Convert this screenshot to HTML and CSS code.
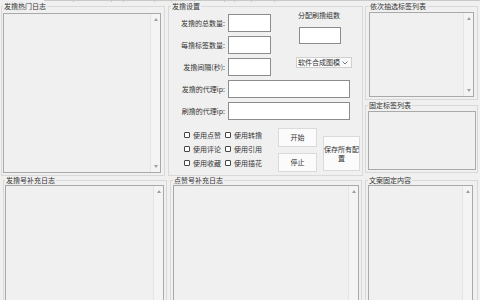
FILE: index.html
```html
<!DOCTYPE html>
<html lang="zh-CN">
<head>
<meta charset="utf-8">
<title>发撸工具</title>
<link rel="stylesheet" href="styles.css">
</head>
<body>
<div class="tabstrip"><span></span><span></span><span></span><span></span><span></span><span></span><span></span><span></span><span></span><span></span><span></span></div>
<div class="layout">
  <fieldset class="grp g-hot">
    <legend>发撸热门日志</legend>
    <div class="memo"><div class="vscroll"><i class="up"></i><i class="down"></i></div></div>
  </fieldset>

  <fieldset class="grp g-set">
    <legend>发撸设置</legend>
    <div class="block1">
      <div class="fields1">
        <div class="row"><span class="lbl">发撸的总数量:</span><span class="inp"></span></div>
        <div class="row"><span class="lbl">每撸标签数量:</span><span class="inp"></span></div>
        <div class="row"><span class="lbl">发撸间隔(秒):</span><span class="inp"></span></div>
      </div>
      <div class="right1">
        <span class="lbl2">分配刷撸组数</span>
        <span class="inp inp2"></span>
        <div class="combo"><span class="combo-text">软件合成图模</span><svg class="chev" width="6" height="4" viewBox="0 0 6 4"><polyline points="0.5,0.5 3,3 5.5,0.5" fill="none" stroke="#555" stroke-width="0.8"/></svg></div>
      </div>
    </div>
    <div class="block2">
      <div class="row"><span class="lbl">发撸的代理ip:</span><span class="inp wide"></span></div>
      <div class="row"><span class="lbl">刷撸的代理ip:</span><span class="inp wide"></span></div>
    </div>
    <div class="block3">
      <div class="checks">
        <label class="chk"><span class="box"></span>使用点赞</label>
        <label class="chk"><span class="box"></span>使用转撸</label>
        <label class="chk"><span class="box"></span>使用评论</label>
        <label class="chk"><span class="box"></span>使用引用</label>
        <label class="chk"><span class="box"></span>使用收藏</label>
        <label class="chk"><span class="box"></span>使用插花</label>
      </div>
      <div class="btns">
        <button class="btn">开始</button>
        <button class="btn">停止</button>
      </div>
      <button class="btn save">保存所有配置</button>
    </div>
  </fieldset>

  <div class="rightcol">
    <fieldset class="grp g-seq">
      <legend>依次抽选标签列表</legend>
      <div class="memo list-seq"><div class="vscroll"><i class="up"></i><i class="down"></i></div></div>
    </fieldset>
    <fieldset class="grp g-fixed">
      <legend>固定标签列表</legend>
      <div class="memo list-fixed"></div>
    </fieldset>
  </div>

  <fieldset class="grp g-fahu">
    <legend>发撸号补充日志</legend>
    <div class="memo"><div class="vscroll"><i class="up"></i></div></div>
  </fieldset>
  <fieldset class="grp g-like">
    <legend>点赞号补充日志</legend>
    <div class="memo"><div class="vscroll"><i class="up"></i></div></div>
  </fieldset>
  <fieldset class="grp g-copy">
    <legend>文案固定内容</legend>
    <div class="memo"><div class="vscroll"><i class="up"></i></div></div>
  </fieldset>
</div>
</body>
</html>
```
FILE: styles.css
```css
* { box-sizing: border-box; }
html, body {
  margin: 0;
  width: 480px;
  height: 300px;
  overflow: hidden;
  background: #f0f0f0;
  font-family: "Noto Sans CJK SC", "Noto Sans", sans-serif;
  font-size: 7px;
  line-height: 9px;
  color: #333;
}

.tabstrip {
  display: flex;
  height: 2px;
  padding-left: 44px;
}
.tabstrip span {
  width: 30px;
  border-top: 1px solid #c9c9c9;
  border-right: 1px solid #c9c9c9;
}
.tabstrip span:nth-child(2) { width: 38px; }
.tabstrip span:nth-child(3) { width: 12px; }
.tabstrip span:nth-child(4) { width: 31px; }
.tabstrip span:nth-child(5) { width: 17px; }
.tabstrip span:nth-child(6) { width: 23px; }
.tabstrip span:nth-child(7) { width: 30px; }
.tabstrip span:nth-child(8) { width: 10px; }
.tabstrip span:nth-child(9) { width: 17px; }
.tabstrip span:nth-child(10) { width: 23px; }
.tabstrip span:nth-child(11) { flex: 1; border-right: none; }

.layout {
  display: grid;
  grid-template-columns: 168px 196px 116px;
  grid-template-rows: 174px 130px;
}

.grp {
  margin: 0;
  border: 1px solid #d9d9d9;
  min-width: 0;
  display: flex;
  flex-direction: column;
}
.grp legend {
  padding: 0 1px;
  font-size: 7px;
  line-height: 9px;
  color: #333;
}

.memo {
  flex: 1;
  border: 1px solid #a9a9a9;
  background: #f0f0f0;
  display: flex;
  justify-content: flex-end;
}
.vscroll {
  width: 10px;
  border-left: 1px solid #e4e4e4;
  background: #f4f4f4;
  display: flex;
  flex-direction: column;
  justify-content: space-between;
  align-items: center;
  padding: 4px 0;
}
.vscroll .up, .vscroll .down {
  display: block;
  width: 0;
  height: 0;
  border-left: 2.5px solid transparent;
  border-right: 2.5px solid transparent;
}
.vscroll .up { border-bottom: 3px solid #a0a0a0; }
.vscroll .down { border-top: 3px solid #a0a0a0; }

.g-hot { margin: 0 3px 0 1px; padding: 2px 3px 2px 1px; }
.g-set { margin: 0 1px 0 0; padding: 0 2px 2px 2px; }
.rightcol { display: flex; flex-direction: column; }
.g-seq { flex: none; margin: 0 2px 1px 1px; padding: 1px 3px 2px 3px; }
.list-seq { flex: none; height: 85px; }
.g-fixed { flex: none; margin: 0 2px 0 1px; padding: 1px 1px 2px 2px; }
.list-fixed { flex: none; height: 59px; }
.g-fahu { margin: 0 1px 0 3px; padding: 0 2px 0 1px; }
.g-like { margin: 0 2px; padding: 0 2px; }
.g-copy { margin: 0 2px 0 1px; padding: 0 4px 0 2px; }

/* settings */
.block1 { display: flex; height: 66px; flex: none; }
.fields1 { display: flex; flex-direction: column; gap: 4px; padding-top: 3px; }
.row { display: flex; align-items: center; height: 18px; }
.lbl {
  width: 57px;
  text-align: right;
  padding-right: 3px;
  white-space: nowrap;
}
.inp {
  display: block;
  width: 43px;
  height: 18px;
  border: 1px solid #8c8c8c;
  background: #fff;
}
.inp.wide { width: 122px; }
.right1 {
  margin-left: 25px;
  width: 56px;
  display: flex;
  flex-direction: column;
}
.lbl2 { margin-left: 2px; white-space: nowrap; }
.inp2 { width: 42px; height: 17px; margin: 7px 0 0 3px; }
.combo {
  margin-top: 13px;
  height: 11px;
  width: 56px;
  border: 1px solid #d0d0d0;
  background: #fafafa;
  display: flex;
  align-items: center;
  justify-content: space-between;
  padding: 0 3px 0 1px;
  line-height: 9px;
}
.combo-text { white-space: nowrap; }
.chev { display: block; }

.block2 { margin-top: 3px; display: flex; flex-direction: column; gap: 4px; flex: none; }

.block3 { margin-top: 8px; display: flex; align-items: flex-start; flex: none; }
.checks {
  margin-left: 13px;
  display: grid;
  grid-template-columns: 41px 41px;
  grid-auto-rows: 14px;
}
.chk {
  display: flex;
  align-items: center;
  gap: 3px;
  white-space: nowrap;
}
.box {
  display: block;
  width: 6px;
  height: 6px;
  border: 1px solid #444;
  border-radius: 1px;
  background: #fff;
}
.btns { margin-left: 12px; display: flex; flex-direction: column; gap: 6px; }
.btn {
  width: 39px;
  height: 19px;
  padding: 0;
  margin: 0;
  border: 1px solid #dadada;
  background: #fbfbfb;
  font-family: "Noto Sans CJK SC", "Noto Sans", sans-serif;
  font-size: 7px;
  line-height: 9px;
  color: #333;
}
.save { margin: 8px 0 0 6px; height: 35px; }
```
